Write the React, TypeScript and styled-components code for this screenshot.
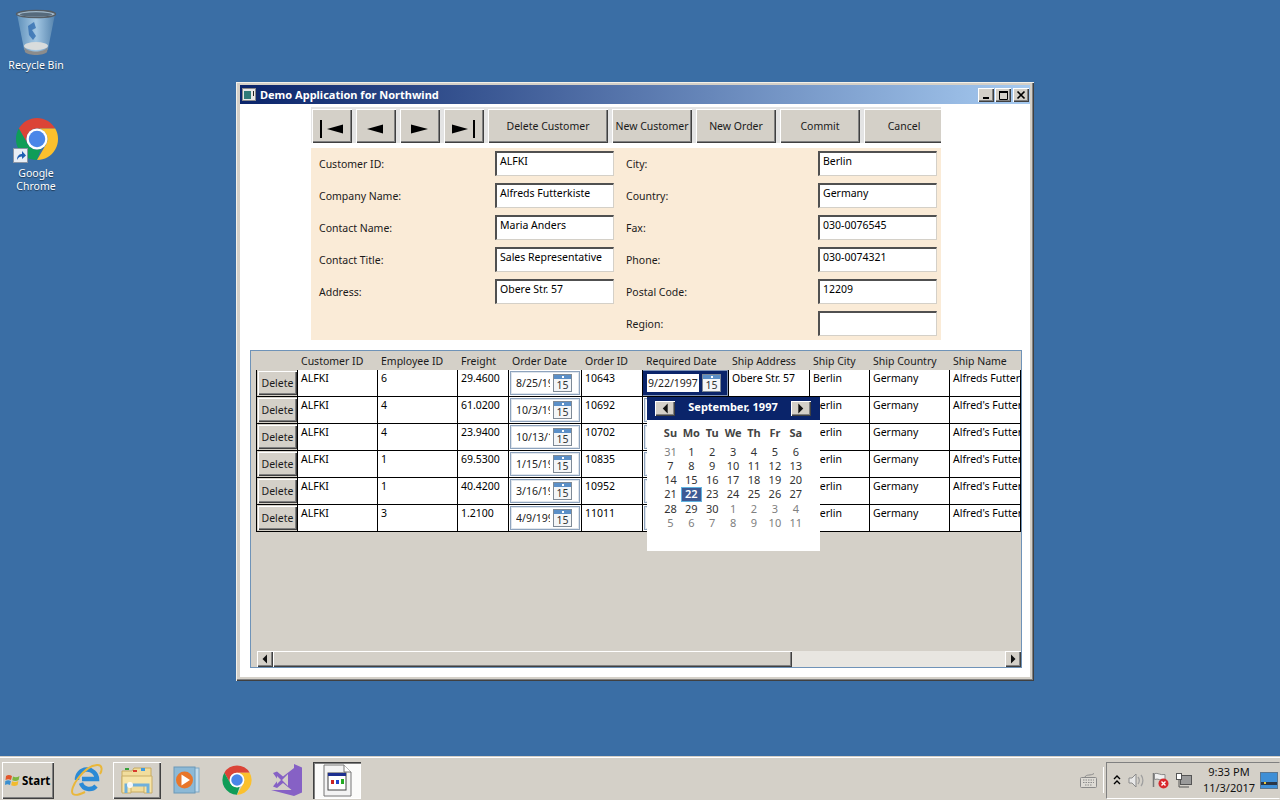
import React from "react";
import styled, { createGlobalStyle, css } from "styled-components";

const Global = createGlobalStyle`
  html, body { margin: 0; padding: 0; height: 100%; overflow: hidden; }
  body { font-family: "Noto Sans", "DejaVu Sans", sans-serif; font-size: 10.5px; color: #000; }
  * { box-sizing: border-box; }
`;

const raised = css`
  background: #d4d0c8;
  box-shadow: inset 1px 1px 0 #fff, inset -1px -1px 0 #404040, inset -2px -2px 0 #808080;
`;

const Desktop = styled.div`
  position: relative;
  width: 1280px;
  height: 800px;
  background: #3a6ea5;
  display: flex;
  flex-direction: column;
  overflow: hidden;
`;
const Wallpaper = styled.div`flex: 1;`;

const DeskIcon = styled.div<{ $top: number }>`
  position: absolute;
  left: 0;
  top: ${(p) => p.$top}px;
  width: 72px;
  display: flex;
  flex-direction: column;
  align-items: center;
  color: #fff;
  font-size: 10.5px;
  line-height: 13px;
  text-align: center;
  text-shadow: 0 1px 1px rgba(0, 0, 0, 0.5);
`;
const DeskLabel = styled.span<{ $mt: number }>`margin-top: ${(p) => p.$mt}px;`;
const ShortcutWrap = styled.div`position: relative; width: 46px; height: 46px; margin-left: 2px;`;
const ShortcutBadge = styled.div`
  position: absolute;
  left: -1px;
  bottom: -1px;
  width: 15px;
  height: 15px;
  background: #e8eef5;
  border: 1px solid #8a95a5;
  display: flex;
`;

const Win = styled.div`
  position: absolute;
  left: 236px;
  top: 82px;
  width: 798px;
  height: 599px;
  background: #d4d0c8;
  box-shadow: inset 1px 1px 0 #f2f0ea, inset -1px -1px 0 #404040, inset -2px -2px 0 #808080;
  padding: 3px 4px 4px;
  display: flex;
  flex-direction: column;
`;
const TitleBar = styled.div`
  height: 19px;
  background: linear-gradient(90deg, #0a246a, #a6caf0);
  display: flex;
  align-items: center;
  padding: 0 1px 0 2px;
  flex: none;
`;
const TitleText = styled.span`
  color: #fff;
  font-weight: 700;
  font-size: 11px;
  margin-left: 4px;
  flex: 1;
`;
const CtlBtn = styled.div<{ $gap?: number }>`
  ${raised};
  width: 16px;
  height: 14px;
  margin-left: ${(p) => p.$gap ?? 1}px;
  display: flex;
  align-items: center;
  justify-content: center;
`;
const Client = styled.div`
  flex: 1;
  background: #fff;
  display: flex;
  flex-direction: column;
  align-items: flex-start;
  padding-top: 3px;
  min-height: 0;
`;
const Toolbar = styled.div`
  margin-left: 71px;
  width: 630px;
  height: 36px;
  background: #e4e4e4;
  padding: 2px 0 0 1px;
  display: flex;
  gap: 4px;
  overflow: hidden;
  flex: none;
`;
const ToolBtn = styled.div<{ $w: number }>`
  ${raised};
  width: ${(p) => p.$w}px;
  height: 34px;
  flex: none;
  display: flex;
  align-items: center;
  justify-content: center;
  font-size: 10.5px;
  color: #1a1a1a;
`;
const Form = styled.div`
  margin: 5px 0 0 71px;
  width: 630px;
  height: 192px;
  background: #faebd7;
  padding: 3px 4px 0 8px;
  display: grid;
  grid-template-columns: 176px 119px 12px 192px 119px;
  grid-auto-rows: 32px;
  flex: none;
`;
const FieldLabel = styled.div<{ $col: number }>`
  grid-column: ${(p) => p.$col};
  font-size: 10.5px;
  line-height: 26px;
  color: #1a1a1a;
`;
const Field = styled.div<{ $col: number }>`
  grid-column: ${(p) => p.$col};
  height: 25px;
  background: #fff;
  border-style: solid;
  border-width: 2px 1px 1px 2px;
  border-color: #505050 #d4d0c8 #d4d0c8 #505050;
  padding: 1px 3px;
  font-size: 10.5px;
  line-height: 14px;
  color: #000;
  white-space: nowrap;
  overflow: hidden;
`;
const Grid = styled.div`
  position: relative;
  margin: 10px 0 0 10px;
  width: 772px;
  height: 318px;
  background: #d4d0c8;
  border: 1px solid #6f93b8;
  display: flex;
  flex-direction: column;
  flex: none;
`;
const cols = "5px 41px 80px 80px 51px 73px 61px 86px 81px 60px 80px 72px";
const HeadRow = styled.div`
  display: grid;
  grid-template-columns: ${cols};
  height: 19px;
`;
const HeadCell = styled.div<{ $line?: boolean }>`
  padding-left: 4px;
  line-height: 20px;
  font-size: 10.5px;
  color: #1a1a1a;
  white-space: nowrap;
  border-bottom: ${(p) => (p.$line ? "1px solid #000" : "none")};
`;
const DataRow = styled.div`
  display: grid;
  grid-template-columns: ${cols};
  height: 27px;
`;
const Gutter = styled.div``;
const Cell = styled.div<{ $last?: boolean }>`
  background: #fff;
  border-left: 1px solid #000;
  border-bottom: 1px solid #000;
  border-right: ${(p) => (p.$last ? "1px solid #000" : "none")};
  padding: 1px 0 0 3px;
  font-size: 10.5px;
  line-height: 15px;
  white-space: nowrap;
  overflow: hidden;
`;
const ButtonCell = styled.div`
  background: #d4d0c8;
  border-left: 1px solid #000;
  border-bottom: 1px solid #000;
  padding: 1px 0 1px 1px;
`;
const DeleteBtn = styled.div`
  ${raised};
  width: 39px;
  height: 24px;
  display: flex;
  align-items: center;
  justify-content: center;
  font-size: 10.5px;
  color: #1a1a1a;
`;
const PickerCell = styled.div<{ $active?: boolean }>`
  border-left: 1px solid #000;
  border-bottom: 1px solid #000;
  background: ${(p) => (p.$active ? "#0a246a" : "#fff")};
  padding: 1px 1px 1px ${(p) => (p.$active ? 0 : 1)}px;
  overflow: hidden;
  box-shadow: ${(p) => (p.$active ? "inset 0 0 0 1px #7f93b5" : "none")};
`;
const PickerBox = styled.div<{ $active?: boolean }>`
  height: 24px;
  display: flex;
  align-items: center;
  border: 1px solid ${(p) => (p.$active ? "#0a246a" : "#8ea3bd")};
  box-shadow: ${(p) => (p.$active ? "none" : "inset 0 0 0 1px #dfe5ec")};
  padding: ${(p) => (p.$active ? "0 0 0 3px" : "0 0 0 5px")};
`;
const PickerText = styled.div<{ $w: number; $active?: boolean }>`
  width: ${(p) => p.$w}px;
  flex: none;
  overflow: hidden;
  white-space: nowrap;
  font-size: 10.5px;
  background: ${(p) => (p.$active ? "#fff" : "transparent")};
  padding-left: ${(p) => (p.$active ? "1px" : "0")};
  line-height: 18px;
  color: #222;
`;
const CalIconBox = styled.div`
  width: 19px;
  height: 18px;
  flex: none;
  margin-left: 3px;
  border: 1px solid #7f8a96;
  background: #f4f6f8;
  display: flex;
  flex-direction: column;
  align-items: center;
  font-size: 10.5px;
  line-height: 12px;
  color: #333;
`;
const CalIconTop = styled.div`
  width: 100%;
  height: 5px;
  background: #5b8fc7;
  display: flex;
  justify-content: center;
  align-items: center;
  &::after { content: ""; width: 2px; height: 2px; background: #fff; }
`;
const Spacer = styled.div`flex: 1;`;
const ScrollBar = styled.div`
  margin-left: 6px;
  height: 16px;
  background: #e8e6e1;
  display: flex;
  flex: none;
`;
const ScrollArrow = styled.div`
  ${raised};
  width: 16px;
  height: 16px;
  flex: none;
  display: flex;
  align-items: center;
  justify-content: center;
`;
const ScrollThumb = styled.div`
  ${raised};
  width: 519px;
  flex: none;
`;
const Popup = styled.div`
  position: absolute;
  left: 396px;
  top: 46px;
  width: 173px;
  height: 154px;
  background: #fff;
  z-index: 2;
`;
const CalHead = styled.div`
  height: 23px;
  background: #0a246a;
  padding: 4px 9px 0 8px;
  display: flex;
  align-items: flex-start;
  justify-content: space-between;
  color: #fff;
  font-weight: 700;
  font-size: 11px;
  line-height: 12px;
`;
const CalNav = styled.div`
  ${raised};
  width: 20px;
  height: 15px;
  display: flex;
  align-items: center;
  justify-content: center;
`;
const CalGrid = styled.div`
  margin-left: 13px;
  display: grid;
  grid-template-columns: repeat(7, 20.9px);
`;
const DowRow = styled(CalGrid)`
  margin-top: 5px;
  height: 17px;
  margin-bottom: 3px;
`;
const Dow = styled.div`
  text-align: center;
  font-size: 11px;
  font-weight: 700;
  line-height: 15px;
  color: #444;
`;
const Day = styled.div<{ $muted?: boolean; $sel?: boolean }>`
  height: 14.15px;
  text-align: center;
  font-size: 11px;
  line-height: 14px;
  color: ${(p) => (p.$sel ? "#fff" : p.$muted ? "#808080" : "#333")};
  background: ${(p) => (p.$sel ? "#3d5a94" : "transparent")};
  outline: ${(p) => (p.$sel ? "1px solid #5fb2e0" : "none")};
  outline-offset: -1px;
  font-weight: ${(p) => (p.$sel ? 600 : 400)};
`;

const Taskbar = styled.div`
  height: 44px;
  flex: none;
  background: #d4d0c8;
  border-top: 1px solid #d4d0c8;
  box-shadow: inset 0 1px 0 #fff;
  display: flex;
  align-items: center;
  padding: 3px 0 0 2px;
`;
const StartBtn = styled.div`
  ${raised};
  width: 52px;
  height: 37px;
  display: flex;
  align-items: center;
  padding-left: 3px;
  gap: 2px;
  font-weight: 700;
  font-size: 11.5px;
  flex: none;
`;
const TaskSlots = styled.div`
  display: flex;
  gap: 2px;
  margin-left: 9px;
`;
const TaskSlot = styled.div<{ $mode?: "raised" | "active" }>`
  width: 48px;
  height: 37px;
  display: flex;
  align-items: center;
  justify-content: center;
  ${(p) => p.$mode === "raised" && raised};
  ${(p) =>
    p.$mode === "active" &&
    css`
      background: #fbfbfa;
      box-shadow: inset 1px 1px 0 #404040, inset 2px 2px 0 #808080, inset -1px -1px 0 #fff;
    `};
`;
const Grow = styled.div`flex: 1;`;
const KeyboardWrap = styled.div`
  width: 20px;
  display: flex;
  justify-content: center;
  margin-right: 2px;
`;
const Divider = styled.div`
  width: 1px;
  height: 26px;
  background: #fff;
  box-shadow: -1px 0 0 #d4d0c8;
  margin: 0 2px 0 3px;
`;
const Tray = styled.div`
  width: 174px;
  height: 37px;
  flex: none;
  display: flex;
  align-items: center;
  border: 1px solid;
  border-color: #808080 #d4d0c8 #fff #808080;
  box-shadow: inset 1px 1px 0 #d4d0c8;
  padding-left: 6px;
`;
const TrayIcons = styled.div`
  display: flex;
  align-items: center;
  gap: 7px;
`;
const Clock = styled.div`
  width: 62px;
  flex: none;
  margin-left: 6px;
  text-align: center;
  font-size: 11px;
  line-height: 16px;
  color: #111;
`;

const ChromeLogo = ({ size }: { size: number }) => (
  <svg width={size} height={size} viewBox="0 0 48 48">
    <path d="M5 13A22 22 0 0 1 43 13H24A11 11 0 0 0 14.47 29.5Z" fill="#db4437" />
    <path d="M5 13L14.47 29.5A11 11 0 0 0 28 34.3L24 46A22 22 0 0 1 5 13Z" fill="#0f9d58" />
    <path d="M43 13A22 22 0 0 1 24 46L33.5 29.5A11 11 0 0 0 24 13Z" fill="#fbc02d" />
    <circle cx="24" cy="24" r="11" fill="#fff" />
    <circle cx="24" cy="24" r="8.6" fill="#4a86e8" />
  </svg>
);

const RecycleBin = () => (
  <svg width="44" height="48" viewBox="0 0 44 48">
    <defs>
      <linearGradient id="rb" x1="0" x2="1" y1="0" y2="0">
        <stop offset="0" stopColor="#5f90ba" />
        <stop offset="0.5" stopColor="#a4c8e4" />
        <stop offset="1" stopColor="#5583ad" />
      </linearGradient>
    </defs>
    <path d="M3 6L10 41C14 46 30 46 34 41L41 6Z" fill="url(#rb)" />
    <path d="M10 39C14 45 30 45 34 39L33 44C30 48 14 48 11 44Z" fill="#8c8c8c" />
    <ellipse cx="22" cy="38" rx="12" ry="4" fill="#d9dcdc" />
    <path d="M14 18l6-4 2 6-4 2 4 6-3 4-4-5z" fill="#2b68ad" opacity="0.75" />
    <ellipse cx="22" cy="6" rx="19.5" ry="3.6" fill="#9fb6c8" stroke="#545c64" strokeWidth="1.4" />
    <ellipse cx="22" cy="6.5" rx="16" ry="2.2" fill="#566a7c" />
  </svg>
);

const WinFlag = () => (
  <svg width="15" height="14" viewBox="0 0 15 14">
    <path d="M1 3C3 1.5 5 1.8 7 3L6 7C4 6 2.5 6 0.5 7Z" fill="#e2562a" />
    <path d="M8 3.5C10 4.6 12 4.6 14.5 3L13.6 7C11.5 8.4 9.5 8.3 7.2 7.2Z" fill="#7db640" />
    <path d="M0.3 8C2.4 7 4 7 5.9 8L5 12C3 11 1.6 11 0 12Z" fill="#3a8fd0" />
    <path d="M7 8.2C9.2 9.2 11 9.3 13.4 8L12.6 12C10.4 13.3 8.4 13.2 6.2 12.2Z" fill="#f2bb2e" />
  </svg>
);

const IEIcon = () => (
  <svg width="34" height="34" viewBox="0 0 34 34">
    <path d="M7 17a10 10 0 0 1 20-1H12m-1 4a8.8 8.8 0 0 0 15 3" fill="none" stroke="#2b8ad6" strokeWidth="4.4" />
    <path d="M3 31C-2 26 14 3 27 2c6-.5 5 6 3 9M3 31c3 2.500 8 0 12-2" fill="none" stroke="#e9b73a" strokeWidth="2" />
  </svg>
);

const FolderIcon = () => (
  <svg width="32" height="30" viewBox="0 0 32 30">
    <path d="M1 6h10l2-3h17v24H1Z" fill="#f1dd9d" stroke="#c8ab60" />
    <rect x="4" y="3" width="4" height="2" fill="#37a13a" />
    <rect x="12" y="5" width="4" height="2" fill="#d83a2e" />
    <rect x="20" y="3" width="4" height="3" fill="#3f9be0" />
    <path d="M1 11h30v17H23v-8H10v8H1Z" fill="#f6e4a8" stroke="#c9ad66" />
    <path d="M5 28v-8h22v8" fill="none" stroke="#6fb0dc" strokeWidth="3" />
    <circle cx="9" cy="20" r="3" fill="#fff" opacity="0.9" />
  </svg>
);

const MediaIcon = () => (
  <svg width="30" height="28" viewBox="0 0 30 28">
    <rect x="7" y="2" width="20" height="24" fill="#c3dcec" stroke="#7fa8c6" />
    <rect x="2" y="1" width="21" height="26" fill="#8cb9d6" stroke="#6a98b8" />
    <circle cx="12.500" cy="14" r="8.500" fill="#e8762a" />
    <path d="M9.500 8.500L18 14l-8.500 5.500Z" fill="#fff" />
  </svg>
);

const VSIcon = () => (
  <svg width="34" height="34" viewBox="0 0 34 34">
    <path d="M24 1l8 3.500v25L24 33 1 27l23 0V1Z" fill="#8661c5" />
    <path d="M3 10l4-1.500 6 5L24 5v24l-11-9-6 5-4-1.500L8 17Z" fill="#8661c5" />
    <path d="M7 13l4 4-4 4Zm11-2v12l-6-6Z" fill="#d4d0c8" />
  </svg>
);

const AppDocIcon = () => (
  <svg width="30" height="33" viewBox="0 0 30 33">
    <path d="M2 1h20l7 7v24H2Z" fill="#f3f3f3" stroke="#777" />
    <path d="M22 1v7h7" fill="#fff" stroke="#777" />
    <rect x="6" y="9" width="18" height="17" fill="#fff" stroke="#444" />
    <rect x="6" y="9" width="18" height="3" fill="#1c2f8f" />
    <rect x="9" y="16" width="3" height="4" fill="#c22" />
    <rect x="14" y="16" width="3" height="4" fill="#24c" />
    <rect x="19" y="15" width="3" height="5" fill="#2a2" />
  </svg>
);

const TitleIcon = () => (
  <svg width="14" height="13" viewBox="0 0 14 13">
    <rect x="0.500" y="0.500" width="13" height="12" fill="#e8e8e8" stroke="#8a8a8a" />
    <rect x="2" y="3" width="7" height="8" fill="#2f7a78" />
    <rect x="11" y="3" width="1" height="5" fill="#222" />
  </svg>
);

const NavIcon = ({ tip, end, bar }: { tip: number; end: number; bar?: number }) => (
  <svg width="40" height="34" viewBox="0 0 40 34">
    <path d={`M${tip} 20L${end} 15.500V24.500Z`} fill="#000" />
    {bar !== undefined && <rect x={bar} y="11" width="2" height="18" fill="#000" />}
  </svg>
);

const Arrow = ({ dir, s = 8 }: { dir: "l" | "r"; s?: number }) => (
  <svg width={s} height={s + 2} viewBox="0 0 8 10">
    <path d={dir === "l" ? "M1.500 5L6 .5v9Z" : "M6.500 5L2 .5v9Z"} fill="#111" />
  </svg>
);

const CalIcon = () => (
  <CalIconBox>
    <CalIconTop />
    15
  </CalIconBox>
);

const Keyboard = () => (
  <svg width="17" height="15" viewBox="0 0 17 15">
    <path d="M5 4C6 1 11 3 14 0.500" fill="none" stroke="#8a8a8a" />
    <rect x="0.500" y="4.500" width="16" height="10" rx="1" fill="#dedbd5" stroke="#8a8a8a" />
    <path d="M3 7h11M3 9.500h11M5 12h7" stroke="#8a8a8a" strokeDasharray="1.500 1" />
  </svg>
);
const TrayUp = () => (
  <svg width="8" height="10" viewBox="0 0 8 10">
    <path d="M1 4l3-3 3 3M1 9l3-3 3 3" fill="none" stroke="#000" strokeWidth="1.400" />
  </svg>
);
const Speaker = () => (
  <svg width="17" height="15" viewBox="0 0 17 15">
    <path d="M1 5h3l4-4v13l-4-4H1Z" fill="#e8e8e8" stroke="#8a8a8a" />
    <path d="M10 4c1.500 2 1.500 5 0 7M13 2c2.500 3 2.500 8 0 11" fill="none" stroke="#a0a0a0" strokeWidth="1.300" />
  </svg>
);
const TrayFlag = () => (
  <svg width="17" height="17" viewBox="0 0 17 17">
    <path d="M1.500 1v14" stroke="#777" strokeWidth="1.500" />
    <path d="M2.500 1.500C6 0.500 8 3.500 13 2.500V8C9 9 6 6 2.500 7.500Z" fill="#f0f0f0" stroke="#8a8a8a" />
    <circle cx="11.500" cy="11.500" r="5" fill="#d8282d" />
    <path d="M9.500 9.500l4 4m0-4l-4 4" stroke="#fff" strokeWidth="1.400" />
  </svg>
);
const Network = () => (
  <svg width="16" height="16" viewBox="0 0 16 16">
    <rect x="4.500" y="3.500" width="11" height="9" fill="#9a9a9a" stroke="#555" />
    <rect x="0.500" y="1.500" width="5" height="6" fill="#fff" stroke="#555" />
    <path d="M3 7v8h10" fill="none" stroke="#555" />
  </svg>
);
const ShowDesktop = () => (
  <svg width="18" height="17" viewBox="0 0 18 17">
    <rect x="0.500" y="0.500" width="17" height="16" fill="#3f8fd6" stroke="#5a7690" />
    <rect x="1" y="10" width="16" height="3" fill="#2a3646" />
    <rect x="4" y="10" width="2" height="2" fill="#e7c53a" />
  </svg>
);

const fields: [string, string, string, string][] = [
  ["Customer ID:", "ALFKI", "City:", "Berlin"],
  ["Company Name:", "Alfreds Futterkiste", "Country:", "Germany"],
  ["Contact Name:", "Maria Anders", "Fax:", "030-0076545"],
  ["Contact Title:", "Sales Representative", "Phone:", "030-0074321"],
  ["Address:", "Obere Str. 57", "Postal Code:", "12209"],
];

const headers = ["Customer ID", "Employee ID", "Freight", "Order Date", "Order ID", "Required Date", "Ship Address", "Ship City", "Ship Country", "Ship Name"];

const rows = [
  { emp: "6", fr: "29.4600", od: "8/25/1997", id: "10643", rd: "9/22/1997", addr: "Obere Str. 57", name: "Alfreds Futterkiste" },
  { emp: "4", fr: "61.0200", od: "10/3/1997", id: "10692", rd: "10/31/1997", addr: "Obere Str. 57", name: "Alfred's Futterkiste" },
  { emp: "4", fr: "23.9400", od: "10/13/1997", id: "10702", rd: "11/24/1997", addr: "Obere Str. 57", name: "Alfred's Futterkiste" },
  { emp: "1", fr: "69.5300", od: "1/15/1998", id: "10835", rd: "2/12/1998", addr: "Obere Str. 57", name: "Alfred's Futterkiste" },
  { emp: "1", fr: "40.4200", od: "3/16/1998", id: "10952", rd: "4/27/1998", addr: "Obere Str. 57", name: "Alfred's Futterkiste" },
  { emp: "3", fr: "1.2100", od: "4/9/1998", id: "11011", rd: "5/7/1998", addr: "Obere Str. 57", name: "Alfred's Futterkiste" },
];

const days: [number, boolean][] = [
  [31, true],
  ...Array.from({ length: 30 }, (_, i) => [i + 1, false] as [number, boolean]),
  ...Array.from({ length: 11 }, (_, i) => [i + 1, true] as [number, boolean]),
];

export default function App() {
  return (
    <Desktop>
      <Global />
      <DeskIcon $top={8}>
        <RecycleBin />
        <DeskLabel $mt={3}>Recycle Bin</DeskLabel>
      </DeskIcon>
      <DeskIcon $top={116}>
        <ShortcutWrap>
          <ChromeLogo size={46} />
          <ShortcutBadge>
            <svg width="13" height="13" viewBox="0 0 13 13">
              <path d="M3 11C3 6 6 5 8 5V2l4 4.500L8 10V7.500C6 7.500 4 8.500 3 11Z" fill="#1f5fb4" />
            </svg>
          </ShortcutBadge>
        </ShortcutWrap>
        <DeskLabel $mt={5}>
          Google
          <br />
          Chrome
        </DeskLabel>
      </DeskIcon>

      <Wallpaper />

      <Win>
        <TitleBar>
          <TitleIcon />
          <TitleText>Demo Application for Northwind</TitleText>
          <CtlBtn>
            <svg width="10" height="10" viewBox="0 0 10 10"><rect x="2" y="7" width="6" height="2" fill="#000" /></svg>
          </CtlBtn>
          <CtlBtn>
            <svg width="10" height="10" viewBox="0 0 10 10"><path d="M1.500 2.500h8v7h-8Z" fill="none" stroke="#000" /><rect x="1" y="1" width="9" height="2" fill="#000" /></svg>
          </CtlBtn>
          <CtlBtn $gap={2}>
            <svg width="10" height="10" viewBox="0 0 10 10"><path d="M1.500 1.500l7 7m0-7l-7 7" stroke="#000" strokeWidth="1.700" /></svg>
          </CtlBtn>
        </TitleBar>
        <Client>
          <Toolbar>
            <ToolBtn $w={40}><NavIcon tip={15} end={31} bar={8} /></ToolBtn>
            <ToolBtn $w={40}><NavIcon tip={11} end={27} /></ToolBtn>
            <ToolBtn $w={40}><NavIcon tip={28} end={11} /></ToolBtn>
            <ToolBtn $w={40}><NavIcon tip={24} end={8} bar={29} /></ToolBtn>
            <ToolBtn $w={120}>Delete Customer</ToolBtn>
            <ToolBtn $w={80}>New Customer</ToolBtn>
            <ToolBtn $w={80}>New Order</ToolBtn>
            <ToolBtn $w={80}>Commit</ToolBtn>
            <ToolBtn $w={80}>Cancel</ToolBtn>
          </Toolbar>
          <Form>
            {fields.map(([a, b, c, d]) => (
              <React.Fragment key={a}>
                <FieldLabel $col={1}>{a}</FieldLabel>
                <Field $col={2}>{b}</Field>
                <FieldLabel $col={4}>{c}</FieldLabel>
                <Field $col={5}>{d}</Field>
              </React.Fragment>
            ))}
            <FieldLabel $col={4}>Region:</FieldLabel>
            <Field $col={5} />
          </Form>
          <Grid>
            <HeadRow>
              <HeadCell />
              <HeadCell $line />
              {headers.map((h) => (
                <HeadCell key={h} $line>{h}</HeadCell>
              ))}
            </HeadRow>
            {rows.map((r, i) => (
              <DataRow key={r.id}>
                <Gutter />
                <ButtonCell><DeleteBtn>Delete</DeleteBtn></ButtonCell>
                <Cell>ALFKI</Cell>
                <Cell>{r.emp}</Cell>
                <Cell>{r.fr}</Cell>
                <PickerCell>
                  <PickerBox>
                    <PickerText $w={34}>{r.od}</PickerText>
                    <CalIcon />
                  </PickerBox>
                </PickerCell>
                <Cell>{r.id}</Cell>
                <PickerCell $active={i === 0}>
                  <PickerBox $active={i === 0}>
                    <PickerText $w={52} $active={i === 0}>{r.rd}</PickerText>
                    <CalIcon />
                  </PickerBox>
                </PickerCell>
                <Cell>{r.addr}</Cell>
                <Cell>Berlin</Cell>
                <Cell>Germany</Cell>
                <Cell $last>{r.name}</Cell>
              </DataRow>
            ))}
            <Spacer />
            <ScrollBar>
              <ScrollArrow><Arrow dir="l" /></ScrollArrow>
              <ScrollThumb />
              <Spacer />
              <ScrollArrow><Arrow dir="r" /></ScrollArrow>
            </ScrollBar>
            <Popup>
              <CalHead>
                <CalNav><Arrow dir="l" s={9} /></CalNav>
                September, 1997
                <CalNav><Arrow dir="r" s={9} /></CalNav>
              </CalHead>
              <DowRow>
                {["Su", "Mo", "Tu", "We", "Th", "Fr", "Sa"].map((d) => (
                  <Dow key={d}>{d}</Dow>
                ))}
              </DowRow>
              <CalGrid>
                {days.map(([d, m], i) => (
                  <Day key={i} $muted={m} $sel={!m && d === 22}>{d}</Day>
                ))}
              </CalGrid>
            </Popup>
          </Grid>
        </Client>
      </Win>

      <Taskbar>
        <StartBtn><WinFlag />Start</StartBtn>
        <TaskSlots>
          <TaskSlot><IEIcon /></TaskSlot>
          <TaskSlot $mode="raised"><FolderIcon /></TaskSlot>
          <TaskSlot><MediaIcon /></TaskSlot>
          <TaskSlot><ChromeLogo size={32} /></TaskSlot>
          <TaskSlot><VSIcon /></TaskSlot>
          <TaskSlot $mode="active"><AppDocIcon /></TaskSlot>
        </TaskSlots>
        <Grow />
        <KeyboardWrap><Keyboard /></KeyboardWrap>
        <Divider />
        <Tray>
          <TrayIcons>
            <TrayUp />
            <Speaker />
            <TrayFlag />
            <Network />
          </TrayIcons>
          <Clock>9:33 PM<br />11/3/2017</Clock>
          <ShowDesktop />
        </Tray>
      </Taskbar>
    </Desktop>
  );
}
